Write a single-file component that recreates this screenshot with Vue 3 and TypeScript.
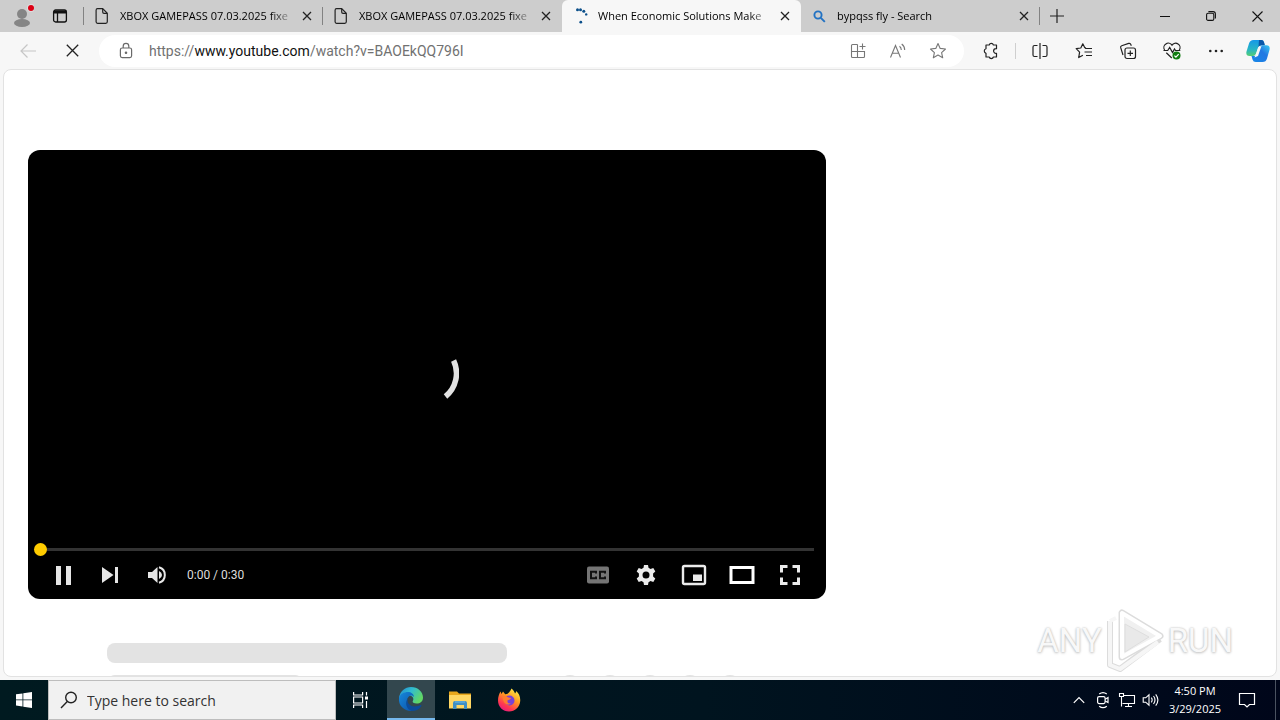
<script setup lang="ts">
import { ref } from 'vue'

interface Tab {
  id: number
  title: string
  kind: 'file' | 'loading' | 'search'
}

const tabs: Tab[] = [
  { id: 1, title: 'XBOX GAMEPASS 07.03.2025 fixe', kind: 'file' },
  { id: 2, title: 'XBOX GAMEPASS 07.03.2025 fixe', kind: 'file' },
  { id: 3, title: 'When Economic Solutions Make', kind: 'loading' },
  { id: 4, title: 'bypqss fly - Search', kind: 'search' },
]
const activeTab = ref(3)
const position = ref(0)
const query = ref('')
</script>

<template>
  <div class="desktop">
    <header class="tab-strip">
      <div class="strip-tools">
        <button class="strip-button" aria-label="Profile">
          <svg width="24" height="28" viewBox="0 0 24 28">
            <circle cx="12" cy="12" r="5" fill="#858585" />
            <ellipse cx="12" cy="21" rx="8" ry="4" fill="#858585" />
            <circle cx="21" cy="6" r="4" fill="#dedede" />
            <circle cx="21" cy="6" r="3" fill="#dc0014" />
          </svg>
        </button>
        <button class="strip-button" aria-label="Tab actions">
          <svg width="16" height="16" viewBox="0 0 16 16" fill="none" stroke="#111">
            <rect x="1.6" y="2" width="12.8" height="12" rx="2" stroke-width="1.3" />
            <path d="M2 4h12" stroke-width="3" />
            <path d="M5.5 4v10" stroke-width="1.3" />
          </svg>
        </button>
      </div>
      <div class="tabs" role="tablist">
        <div
          v-for="tab in tabs"
          :key="tab.id"
          class="tab"
          :class="{ active: tab.id === activeTab }"
          role="tab"
          tabindex="0"
          :aria-selected="tab.id === activeTab"
          @click="activeTab = tab.id"
        >
          <svg v-if="tab.kind === 'file'" class="tab-icon" viewBox="0 0 16 16" fill="none" stroke="#222" stroke-width="1.2">
            <path d="M3.5 .7h5.2l4.6 4.6v8.5q0 1.5-1.5 1.5H3.6q-1.5 0-1.5-1.5V2.2q0-1.500 1.400-1.500z" />
            <path d="M8.7 1v3q0 1.3 1.3 1.3h3" />
          </svg>
          <svg v-else-if="tab.kind === 'loading'" class="tab-icon" viewBox="0 0 16 16" fill="#0b4f8a">
            <circle cx="5.500" cy="1.800" r="1.500" />
            <circle cx="8.500" cy="1.800" r="1.500" />
            <circle cx="11.800" cy="3.200" r="1.500" />
            <circle cx="14.200" cy="6.400" r="1.200" />
            <circle cx="8.800" cy="14.200" r="1.400" />
          </svg>
          <svg v-else class="tab-icon" viewBox="0 0 16 16" fill="none" stroke="#2272c3" stroke-width="1.9">
            <circle cx="7" cy="7" r="3.6" />
            <path d="M9.8 9.8l4 4" />
          </svg>
          <span class="tab-title">{{ tab.title }}</span>
          <button class="tab-close" aria-label="Close tab">
            <svg width="10" height="10" viewBox="0 0 10 10" stroke="#222" stroke-width="1.3">
              <path d="M1 1l8 8M9 1l-8 8" />
            </svg>
          </button>
        </div>
      </div>
      <button class="new-tab" aria-label="New tab">
        <svg width="14" height="14" viewBox="0 0 14 14" stroke="#222" stroke-width="1.2">
          <path d="M7 0v14M0 7h14" />
        </svg>
      </button>
      <div class="window-controls">
        <button aria-label="Minimize">
          <svg width="10" height="10" viewBox="0 0 10 10" stroke="#111"><path d="M0 5.5h10" /></svg>
        </button>
        <button aria-label="Restore">
          <svg width="10" height="10" viewBox="0 0 10 10" fill="none" stroke="#111" stroke-width="1.1">
            <rect x=".6" y="2.2" width="7.2" height="7.2" rx="1.5" />
            <path d="M2.4 .6H7q2.4 0 2.4 2.4v4.6" />
          </svg>
        </button>
        <button aria-label="Close window">
          <svg width="11" height="11" viewBox="0 0 11 11" stroke="#111" stroke-width="1.1">
            <path d="M.5 .5l10 10M10.5 .5l-10 10" />
          </svg>
        </button>
      </div>
    </header>

    <nav class="toolbar" aria-label="Browser toolbar">
      <button class="tool" aria-label="Back" disabled>
        <svg width="18" height="16" viewBox="0 0 18 16" fill="none" stroke="#c6c6c6" stroke-width="1.2">
          <path d="M17 8H2M8.5 1.5L2 8l6.5 6.5" />
        </svg>
      </button>
      <button class="tool" aria-label="Stop">
        <svg width="13" height="13" viewBox="0 0 13 13" stroke="#222" stroke-width="1.3">
          <path d="M.8 .8l11.4 11.4M12.2 .8L.8 12.2" />
        </svg>
      </button>
      <div class="address">
        <svg class="lock" width="20" height="20" viewBox="0 0 20 20" fill="none" stroke="#6a6a6a" stroke-width="1.2">
          <rect x="4.4" y="7" width="11.2" height="9.6" rx="1.8" />
          <path d="M7.2 7V5.2a2.8 2.8 0 0 1 5.6 0V7" />
          <circle cx="10" cy="11.8" r=".7" fill="#555" />
        </svg>
        <a class="url" href="#">https://<b>www.youtube.com</b>/watch?v=BAOEkQQ796I</a>
        <button class="address-action" aria-label="Apps">
          <svg width="16" height="16" viewBox="0 0 16 16" fill="none" stroke="#777" stroke-width="1.1">
            <path d="M7.5 1.5h-5q-1 0-1 1v11q0 1 1 1h11q1 0 1-1v-5h-13M7.5 1.5v13M12.5 .5v6M9.5 3.5h6" />
          </svg>
        </button>
        <button class="address-action" aria-label="Read aloud">
          <svg width="18" height="16" viewBox="0 0 18 16" fill="none" stroke="#777" stroke-width="1.1">
            <path d="M1.5 14.5L6.5 2.5l5 12M3.3 10.3h6.4M10.5 3.2q1.8 1.3 1.8 3.8M12.7 1q3 2.3 3 6" />
          </svg>
        </button>
        <button class="address-action" aria-label="Add to favorites">
          <svg width="18" height="18" viewBox="0 0 18 18" fill="none" stroke="#777" stroke-width="1.1" stroke-linejoin="round">
            <path d="M9 1.5l2.2 4.9 5.3.6-3.9 3.6 1.1 5.2L9 13.1l-4.7 2.7 1.1-5.2L1.5 7l5.3-.6z" />
          </svg>
        </button>
      </div>
      <div class="tools">
        <button class="tool" aria-label="Extensions">
          <svg width="18" height="18" viewBox="0 0 18 18" fill="none" stroke="#222" stroke-width="1.2" stroke-linejoin="round">
            <path d="M4 3h3.200a2.200 2.200 0 0 1 4.200 0h3.100v3.700h-.6a2.300 2.300 0 0 0 0 4.600h.6V15h-3.100a2.200 2.200 0 0 1-4.200 0H4v-3.700a2.400 2.400 0 0 1 0-4.600z" />
          </svg>
        </button>
        <span class="divider"></span>
        <button class="tool" aria-label="Split screen">
          <svg width="18" height="18" viewBox="0 0 18 18" fill="none" stroke="#222" stroke-width="1.2">
            <path d="M6.5 3.500h-3q-1.500 0-1.500 1.500v8q0 1.500 1.500 1.500h3M11.500 3.500h3q1.500 0 1.500 1.500v8q0 1.500-1.500 1.500h-3M9 1v16" />
          </svg>
        </button>
        <button class="tool" aria-label="Favorites">
          <svg width="18" height="18" viewBox="0 0 18 18" fill="none" stroke="#222" stroke-width="1.2" stroke-linejoin="round">
            <path d="M11 6L9.8 5.7 7.8 1.8 5.8 6 1.2 6.7l3.4 3.5-.9 5.4 4.2-2.4M10 6.5h7M9.5 10h7.5M11 13.5h6" />
          </svg>
        </button>
        <button class="tool" aria-label="Collections">
          <svg width="18" height="18" viewBox="0 0 18 18" fill="none" stroke="#222" stroke-width="1.2">
            <rect x="6" y="6" width="10.5" height="10.5" rx="2" />
            <path d="M11.3 8.5v5.5M8.5 11.3H14M4 13l-2.3-7.3q-.4-1.5 1-2l7-2.3q1.7-.4 2.2 1.2l.4 1.2" />
          </svg>
        </button>
        <button class="tool" aria-label="Browser essentials">
          <svg width="20" height="20" viewBox="0 0 20 20" fill="none" stroke="#222" stroke-width="1.2">
            <path d="M2.6 9a4.2 4.2 0 0 1 7.4-4.8A4.2 4.2 0 0 1 17.3 9M1.5 9.5h4.2l2-3 2.8 5 2-3.5 1 1.5h4.8M4.3 11.8l5.5 5.2" />
            <circle cx="14.5" cy="14.5" r="4" fill="#107c10" stroke="none" />
            <path d="M12.4 14.6l1.5 1.500 2.800-3" stroke="#fff" />
          </svg>
        </button>
        <button class="tool" aria-label="More">
          <svg width="16" height="4" viewBox="0 0 16 4" fill="#222">
            <circle cx="2.3" cy="2" r="1.3" /><circle cx="8" cy="2" r="1.3" /><circle cx="13.7" cy="2" r="1.3" />
          </svg>
        </button>
        <button class="tool copilot" aria-label="Copilot">
          <svg width="24" height="24" viewBox="0 0 24 24">
            <defs>
              <linearGradient id="cop-a" x1="0" y1="0" x2="0" y2="1">
                <stop offset="0" stop-color="#1598e8" /><stop offset=".6" stop-color="#28b6c4" /><stop offset="1" stop-color="#55ce73" />
              </linearGradient>
              <linearGradient id="cop-b" x1="1" y1="0" x2="0" y2="1">
                <stop offset="0" stop-color="#38cdf2" /><stop offset=".4" stop-color="#2378e2" /><stop offset="1" stop-color="#1588e8" />
              </linearGradient>
            </defs>
            <path d="M7.5 1h7.7q2.3 0 2.8 2.2l.8 3h-3.3q-2.8 0-3.6 2.7l-1.6 5.4q-.8 2.700-3 2.700H3.500Q-.5 17 .5 12.500L3 4.500Q4 1 7.500 1z" fill="url(#cop-a)" />
            <path d="M13 1h2.200q2.300 0 2.800 2.200l.8 3h-3.300q-2 0-3 1.600z" fill="#0a57a8" />
            <path d="M16.500 23H9.800q-2.600 0-3.300-2.500L5.500 17h2.800q2.800 0 3.600-2.700l1.600-5.400q.8-2.700 3-2.700h4q4 0 3 4.600L21 19.500Q20 23 16.500 23z" fill="url(#cop-b)" />
            <path d="M12.500 8l3-1-3.500 10-3.500 1.500z" fill="#f7f7f7" />
          </svg>
        </button>
      </div>
    </nav>

    <main class="page">
      <section class="primary">
        <div class="player">
          <div class="spinner-layer">
            <svg width="64" height="64" viewBox="0 0 64 64" fill="none" stroke="#e2e2e2" stroke-width="5.5">
              <path d="M58.6 18.5A30 30 0 0 1 50.5 54.5" />
            </svg>
          </div>
          <input v-model="position" class="seek" type="range" min="0" max="30" aria-label="Seek" />
          <div class="controls">
            <button class="left-control" aria-label="Pause">
              <svg width="36" height="36" viewBox="0 0 36 36" fill="#e6e6e6"><path d="M10 9h5v19h-5zM20 9h5v19h-5z" /></svg>
            </button>
            <button class="left-control" aria-label="Next">
              <svg width="36" height="36" viewBox="0 0 36 36" fill="#e6e6e6"><path d="M9 10l11.500 8L9 26zM22 10h3v16h-3z" /></svg>
            </button>
            <button class="left-control" aria-label="Mute">
              <svg width="36" height="36" viewBox="0 0 36 36">
                <path d="M8 15v6h4l5.500 5V10L12 15z" fill="#e6e6e6" />
                <path d="M19 14q3 1.300 3 4t-3 4z" fill="#e6e6e6" />
                <path d="M19 10.300a8 8 0 0 1 0 15.400" fill="none" stroke="#e6e6e6" stroke-width="2" />
              </svg>
            </button>
            <span class="time">0:00 / 0:30</span>
            <span class="spacer"></span>
            <button class="right-control" aria-label="Subtitles">
              <svg width="36" height="36" viewBox="0 0 36 36">
                <rect x="7" y="9.500" width="22" height="17" rx="2" fill="#757575" />
                <path d="M16 16.500v-1.800h-5v6.600h5v-1.800M25 16.500v-1.800h-5v6.600h5v-1.800" fill="none" stroke="#111" stroke-width="2" />
              </svg>
            </button>
            <button class="right-control" aria-label="Settings">
              <svg width="36" height="36" viewBox="0 0 36 36" fill="#ebebeb">
                <path fill-rule="evenodd" d="M16 8h4l.5 2.800 2 1.200 2.800-1 2 3.500-2.200 1.900v3.200l2.200 1.900-2 3.500-2.800-1-2 1.200L20 28h-4l-.5-2.800-2-1.200-2.800 1-2-3.500 2.200-1.900v-3.200L8.700 14.500l2-3.500 2.800 1 2-1.200zM18 14.500a3.500 3.500 0 1 0 0 7 3.500 3.500 0 0 0 0-7z" />
              </svg>
            </button>
            <button class="right-control" aria-label="Miniplayer">
              <svg width="36" height="36" viewBox="0 0 36 36">
                <rect x="7" y="9" width="22" height="18" rx="1.500" fill="none" stroke="#ebebeb" stroke-width="2.400" />
                <path d="M17 17.500h9v6.500h-9z" fill="#ebebeb" />
              </svg>
            </button>
            <button class="right-control" aria-label="Theater mode">
              <svg width="36" height="36" viewBox="0 0 36 36" fill="none" stroke="#fff" stroke-width="3">
                <path d="M7 10.500h22v15H7z" />
              </svg>
            </button>
            <button class="right-control" aria-label="Full screen">
              <svg width="36" height="36" viewBox="0 0 36 36" fill="none" stroke="#ebebeb" stroke-width="3">
                <path d="M9.500 15.500v-6h6M20.500 9.500h6v6M26.500 20.500v6h-6M15.500 26.500h-6v-6" />
              </svg>
            </button>
          </div>
        </div>
        <div class="placeholder">
          <div class="bar title-bar"></div>
          <div class="placeholder-row">
            <div class="bar meta-bar"></div>
            <div class="dots"><i v-for="n in 5" :key="n"></i></div>
          </div>
        </div>
      </section>
      <div class="watermark">
        <span>ANY</span>
        <svg width="58" height="64" viewBox="0 0 58 64" fill="none" stroke-linejoin="round">
          <path d="M16 4v44L54 27z" stroke="#dcdcdc" stroke-width="7" />
          <path d="M4 12v44l10 4 40-30" stroke="#dcdcdc" stroke-width="6" />
          <path d="M4 12l6-3M4 12v44l10 4 38-27" stroke="#f6f6f6" stroke-width="4" />
          <path d="M16 4v44L54 27z" fill="#f0f0f0" stroke="#fff" stroke-width="4" />
          <path d="M19 15v28l24-15z" fill="#e9e9e9" stroke="#dedede" />
        </svg>
        <span>RUN</span>
      </div>
    </main>

    <footer class="taskbar">
      <button class="start" aria-label="Start">
        <svg width="16" height="16" viewBox="0 0 16 16" fill="#fff">
          <path d="M0 2.300L6.500 1.400v6.100H0zM7.300 1.300L16 0v7.500H7.300zM0 8.300h6.500v6.200L0 13.600zM7.300 8.300H16V16l-8.700-1.300z" />
        </svg>
      </button>
      <label class="search">
        <svg width="18" height="18" viewBox="0 0 18 18" fill="none" stroke="#222" stroke-width="1.400">
          <circle cx="11" cy="6.500" r="5.300" />
          <path d="M7.300 10.400L1 17" />
        </svg>
        <input v-model="query" type="text" placeholder="Type here to search" aria-label="Search" />
      </label>
      <button class="task view" aria-label="Task view">
        <svg width="18" height="18" viewBox="0 0 18 18" fill="none" stroke="#fff" stroke-width="1.200">
          <path d="M1.600 1v3h9V1M1.600 17v-3h9v3M1.600 6h9v6h-9zM14.500 1v3.500M14.500 10v7" />
          <path d="M13 5.500h3v3h-3z" fill="#fff" stroke="none" />
        </svg>
      </button>
      <button class="task current" aria-label="Microsoft Edge">
        <svg width="26" height="26" viewBox="0 0 26 26">
          <defs>
            <linearGradient id="edge-top" x1="0" y1="0" x2="1" y2=".5">
              <stop offset="0" stop-color="#2187cf" /><stop offset=".5" stop-color="#31bcd0" /><stop offset="1" stop-color="#61d765" />
            </linearGradient>
            <linearGradient id="edge-low" x1="0" y1="0" x2="1" y2="1">
              <stop offset="0" stop-color="#1688dc" /><stop offset="1" stop-color="#0d52a5" />
            </linearGradient>
          </defs>
          <path d="M1 12C2 5 7 1 13 1c7 0 12 5 12 10.500 0 4-3 6-6.300 6-3 0-4.500-1-4-2.200 1.300-1.500 1-5.800-3.700-5.800-5 0-8 3-10 2.500z" fill="url(#edge-top)" />
          <path d="M1 12c1-4 5-6 9-6 3 0 6 2 6 5-1-1.500-3-2-4.500-1-4 2.500-3 9.500 2.500 14.900C7 25.500 0 20 1 12z" fill="url(#edge-low)" />
          <path d="M10 12c-2 4 1.500 8.500 6.500 8.500 2.500 0 4.500-1 6-1.500 1-.2 1.200.5.700 1.200C21 23.500 17.500 25 14 25c-5-1-8-8-4-13z" fill="#0c4b99" />
        </svg>
      </button>
      <button class="task" aria-label="File Explorer">
        <svg width="22" height="20" viewBox="0 0 22 20">
          <path d="M0 1.500h8l2 2H22V18H0z" fill="#e9a81c" />
          <path d="M0 5h22v13.500H0z" fill="#ffd763" />
          <path d="M4 19v-6q0-2 2-2h10q2 0 2 2v6h-3v-4H7.500v4z" fill="#3f8fc4" />
          <path d="M6 11h10v2H6z" fill="#57a5d6" />
        </svg>
      </button>
      <button class="task" aria-label="Firefox">
        <svg width="24" height="24" viewBox="0 0 24 24">
          <defs>
            <linearGradient id="fox" x1=".8" y1="0" x2=".2" y2="1">
              <stop offset="0" stop-color="#fff04a" /><stop offset=".4" stop-color="#ff9b20" /><stop offset=".75" stop-color="#ff3750" /><stop offset="1" stop-color="#e31587" />
            </linearGradient>
          </defs>
          <path d="M14.500.5c2 1.500 3 3.500 3.500 5 .8-.5 1-1.300 1-2.500C22 5 23.500 9 23.200 13 22.800 19 18 23.500 12 23.500S1 19 1 12.500C1 9 2 6 3.500 3.500l1 2.500 1.500-2.500 2.200 2.700c2 0 3-.7 4-2C13.300 3 13.800 2 14.500.5z" fill="url(#fox)" />
          <circle cx="12.500" cy="12.500" r="5" fill="#7741d7" />
          <path d="M5.500 8.500c2-1 4-.5 6 1l2.500.5c-.3 1.500-2 1.800-3.500 2.400-.5 2.600 1.500 3.600 3.500 3.100-3 2.500-8 1-8.500-7z" fill="#ff7d2e" />
        </svg>
      </button>
      <span class="spacer"></span>
      <button class="tray" aria-label="Show hidden icons">
        <svg width="12" height="8" viewBox="0 0 12 8" fill="none" stroke="#fff" stroke-width="1.200"><path d="M.8 6.800L6 1.500l5.200 5.300" /></svg>
      </button>
      <button class="tray" aria-label="Meet now">
        <svg width="14" height="18" viewBox="0 0 14 18" fill="none" stroke="#fff" stroke-width="1.200">
          <rect x="1.600" y="5.600" width="7.500" height="7" rx="1.500" />
          <path d="M9.200 8.300L12 6.500v5L9.200 10M3.200 3Q7 .2 10.800 3M3.200 15.200q3.800 2.800 7.600 0" />
        </svg>
      </button>
      <button class="tray" aria-label="Network">
        <svg width="18" height="16" viewBox="0 0 18 16" fill="none" stroke="#fff" stroke-width="1.100">
          <path d="M6 3.500h10.500v8H4.500M10.500 11.500v3M7 14.500h7M1.500 1.500h4v3h-4zM3.500 4.500v10" />
        </svg>
      </button>
      <button class="tray" aria-label="Volume">
        <svg width="18" height="16" viewBox="0 0 18 16" fill="none" stroke="#fff" stroke-width="1.100">
          <path d="M1.200 5.800h2.500L7 2.800v10.400l-3.300-3H1.200zM9.300 5.700q1.700 2.300 0 4.600M11.500 4q3 4 0 8M13.700 2.300q4.400 5.700 0 11.400" />
        </svg>
      </button>
      <button class="clock"><span>4:50 PM</span><span>3/29/2025</span></button>
      <button class="notices" aria-label="Notifications">
        <svg width="18" height="18" viewBox="0 0 18 18" fill="none" stroke="#fff" stroke-width="1.200">
          <path d="M1.500 2.500h15v11h-5L9 16l-2.500-2.500h-5z" />
        </svg>
      </button>
      <button class="show-desktop" aria-label="Show desktop"></button>
    </footer>
  </div>
</template>

<style>
body {
  margin: 0;
}
</style>

<style scoped>
.desktop {
  display: flex;
  flex-direction: column;
  height: 100vh;
  overflow: hidden;
  background: #f7f7f7;
  color: #111;
  font-family: "Open Sans", "Noto Sans", sans-serif;
  font-size: 12px;
}
* {
  box-sizing: border-box;
}
button {
  display: flex;
  align-items: center;
  justify-content: center;
  flex: none;
  padding: 0;
  border: 0;
  background: none;
  font: inherit;
  color: inherit;
}
svg {
  display: block;
  flex: none;
}
.spacer {
  flex: 1;
}

.tab-strip {
  display: flex;
  flex: none;
  height: 32px;
  background: #cdcdcd;
}
.strip-tools {
  display: flex;
  flex: none;
  width: 84px;
  padding-left: 3px;
}
.strip-button {
  width: 38px;
}
.tabs {
  display: flex;
  flex: 0 1 956px;
  min-width: 0;
}
.tab {
  position: relative;
  display: flex;
  align-items: center;
  flex: 1;
  min-width: 0;
  padding: 0 4px 0 10px;
}
.tab::before,
.tab:last-child::after {
  content: "";
  position: absolute;
  left: -1px;
  top: 7px;
  width: 1px;
  height: 18px;
  background: #828282;
}
.tab:last-child::after {
  left: auto;
  right: 0;
}
.tab.active {
  background: #f7f7f7;
  border-radius: 6px 6px 0 0;
}
.tab.active::before,
.tab.active + .tab::before {
  display: none;
}
.tab-icon {
  width: 16px;
  height: 16px;
}
.tab-title {
  flex: 1;
  min-width: 0;
  margin-left: 10px;
  overflow: hidden;
  white-space: nowrap;
  font-size: 11px;
  line-height: 18px;
  color: #000;
  mask-image: linear-gradient(to right, #000 calc(100% - 24px), transparent);
}
.tab-close {
  width: 24px;
  height: 24px;
}
.new-tab {
  width: 34px;
}
.window-controls {
  display: flex;
  margin-left: auto;
}
.window-controls button {
  width: 46px;
}

.toolbar {
  display: flex;
  align-items: center;
  flex: none;
  height: 37px;
  padding: 0 2px 0 6px;
}
.tool {
  width: 44px;
  height: 32px;
}
.tools {
  display: flex;
  align-items: center;
}
.copilot {
  width: 40px;
}
.divider {
  width: 1px;
  height: 16px;
  margin: 0 2px;
  background: #cfcfcf;
}
.address {
  display: flex;
  align-items: center;
  flex: 1;
  min-width: 0;
  height: 32px;
  margin: 0 5px;
  padding: 0 6px 0 17px;
  border-radius: 16px;
  background: #fff;
}
.url {
  flex: 1;
  min-width: 0;
  margin-left: 13px;
  overflow: hidden;
  white-space: nowrap;
  font-family: Roboto, "Open Sans", sans-serif;
  font-size: 14px;
  line-height: 20px;
  color: #717171;
  text-decoration: none;
}
.url b {
  font-weight: 400;
  color: #111;
}
.address-action {
  width: 40px;
  height: 28px;
}

.page {
  position: relative;
  flex: 1;
  min-height: 0;
  margin: 0 3px 3px;
  padding: 80px 24px 0;
  overflow: hidden;
  border: 1px solid #e2e2e2;
  border-radius: 8px;
  background: #fff;
}
.primary {
  width: 65.2%;
}
.player {
  position: relative;
  display: flex;
  flex-direction: column;
  justify-content: flex-end;
  aspect-ratio: 16 / 9;
  padding: 0 12px;
  border-radius: 12px;
  background: #000;
}
.spinner-layer {
  position: absolute;
  inset: 0;
  display: grid;
  place-items: center;
  pointer-events: none;
}
.seek {
  appearance: none;
  height: 13px;
  margin: 0 -6px -5px;
  background: linear-gradient(#333, #333) center / calc(100% - 12px) 3px no-repeat;
}
.seek::-webkit-slider-thumb {
  appearance: none;
  width: 13px;
  height: 13px;
  border-radius: 50%;
  background: #fc0;
}
.controls {
  display: flex;
  align-items: center;
  height: 48px;
}
.left-control {
  width: 47px;
  height: 48px;
}
.right-control {
  width: 48px;
  height: 48px;
}
.time {
  margin-left: 6px;
  font-family: Roboto, sans-serif;
  font-size: 12px;
  color: #ddd;
}
.placeholder {
  padding: 44px 0 0 79px;
}
.bar {
  border-radius: 8px;
  background: #e3e3e3;
}
.title-bar {
  width: 400px;
  height: 20px;
}
.placeholder-row {
  display: flex;
  justify-content: space-between;
  margin-top: 12px;
  padding-right: 84px;
}
.meta-bar {
  width: 196px;
  height: 20px;
}
.dots {
  display: flex;
  gap: 16px;
}
.dots i {
  width: 24px;
  height: 24px;
  border-radius: 50%;
  background: #e3e3e3;
}
.watermark {
  position: absolute;
  right: 43px;
  bottom: 3px;
  display: flex;
  align-items: center;
  gap: 4px;
  font-family: Roboto, sans-serif;
  font-size: 33px;
  line-height: 64px;
  color: #f8f8f8;
  text-shadow: 0 0 2px #bcbcbc, 0 1px 3px #c8c8c8;
}

.taskbar {
  display: flex;
  flex: none;
  height: 40px;
  background: linear-gradient(to right, #001a20, #00141f 55%, #00061a);
  color: #fff;
}
.start {
  width: 48px;
}
.search {
  display: flex;
  align-items: center;
  flex: 0 1 288px;
  gap: 9px;
  min-width: 0;
  padding: 0 11px;
  border: 1px solid #bdbdbd;
  background: #f1f1f1;
}
.search input {
  flex: 1;
  min-width: 0;
  padding: 0;
  border: 0;
  outline: 0;
  background: none;
  font: inherit;
  font-size: 14px;
}
.search input::placeholder {
  color: #333;
  opacity: 1;
}
.task {
  width: 49px;
}
.task.view {
  width: 51px;
  padding-right: 2px;
}
.task.current {
  width: 48px;
  background: #33474e;
  border-bottom: 2px solid #76b9ed;
}
.tray {
  width: 24px;
}
.clock {
  flex-direction: column;
  width: 64px;
  font-size: 11px;
  line-height: 18px;
}
.notices {
  width: 40px;
}
.show-desktop {
  width: 13px;
  background: linear-gradient(#4a5260, #4a5260) 8px 0 / 1px 100% no-repeat;
}
</style>
